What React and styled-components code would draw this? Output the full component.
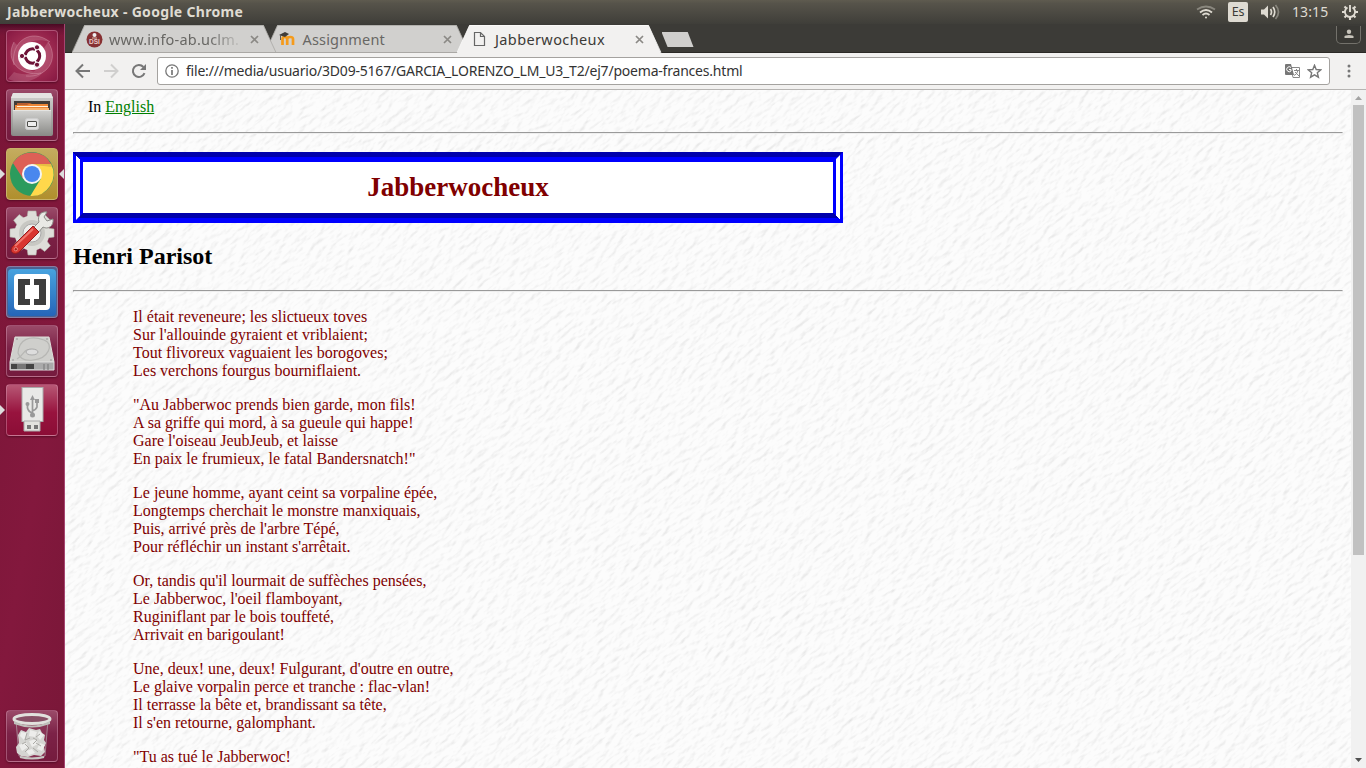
import React from 'react';
import styled, { createGlobalStyle } from 'styled-components';

const GlobalStyle = createGlobalStyle`
  * { box-sizing: border-box; }
  body { margin: 0; overflow: hidden; }
  svg { display: block; flex: none; }
`;
const uiFont = `"Noto Sans", "Open Sans", sans-serif`;

const Desktop = styled.div`
  width: 1366px; height: 768px; display: flex; flex-direction: column; overflow: hidden;
  background: #3c3b37; font-family: ${uiFont};
`;
const TopPanel = styled.header`
  height: 24px; flex: none; display: flex; align-items: center; justify-content: space-between;
  padding: 0 8px 0 7px; color: #dfdbd2; background: linear-gradient(#5f5b4f 0, #56534a 15%, #3f3e39 100%);
`;
const UiText = styled.span`
  display: inline-block; white-space: nowrap; line-height: 20px;
  width: ${p => p.$w}px; font-size: 14px; font-weight: ${p => p.$bold ? 700 : 400};
  letter-spacing: ${p => p.$track || 0}px;
`;
const Indicators = styled.div`display: flex; align-items: center; height: 24px;`;
const Clock = styled(UiText)`margin: 0 13px 0 12px;`;
const Keyboard = styled.span`
  width: 20px; height: 20px; margin: 0 12px; border-radius: 2px; background: #dfdbd2; color: #3c3b37;
  font-size: 12.5px; line-height: 20px; text-align: center; letter-spacing: -.3px;
`;
const Workspace = styled.div`display: flex; flex: 1; min-height: 0;`;
const Launcher = styled.nav`
  width: 65px; flex: none; padding: 6px 7px 6px 6px; display: flex; flex-direction: column; gap: 7px;
  border-right: 1px solid #a64571;
  background: linear-gradient(#4a0923 0, #6d1435 6px, transparent 12px), linear-gradient(100deg, #791536, #83183d 60%, #791738);
`;
const Tile = styled.div`
  position: relative; width: 52px; height: 52px; flex: none; border-radius: 4px;
  background: ${p => p.$bg || 'linear-gradient(#9a4a68, #7c2247 45%, #751b3e)'};
  border: 1px solid ${p => p.$edge || 'rgba(221,160,185,.42)'};
  box-shadow: 0 1px 2px rgba(50,0,20,.5);
  margin-top: ${p => p.$last ? 'auto' : 0};
  & > svg { margin: -1px; }
`;
const Arrow = styled.i`
  position: absolute; top: 20px; width: 0; height: 0; border: 5px solid transparent;
  ${p => p.$right ? 'right: -7px; border-right-color: #ddd; border-left: 0;' : 'left: -7px; border-left-color: #ddd; border-right: 0;'}
`;
const Browser = styled.main`flex: 1; min-width: 0; display: flex; flex-direction: column;`;
const TabStrip = styled.div`
  height: 29px; flex: none; display: flex; padding-left: 7px;
  background: #3c3b37; box-shadow: inset 0 -1px #2b2926;
`;
const Tab = styled.div`
  position: relative; z-index: ${p => p.$z}; width: 205px; height: 29px; margin-right: -12.5px; flex: none;
  display: flex; align-items: center; padding: 1px 18px 0 14px;
`;
const TabShape = styled.svg`position: absolute; left: 0; top: 0; z-index: -1;`;
const TabTitle = styled.div`
  flex: 1; min-width: 0; white-space: nowrap; margin-left: ${p => p.$gap || 6}px;
  font-size: 14.5px; line-height: 20px; letter-spacing: ${p => p.$track || 0}px; color: ${p => p.$active ? '#3c3b37' : '#686764'};
  ${p => p.$fade && 'mask-image: linear-gradient(90deg, #000 100px, transparent 135px);'}
`;
const NewTab = styled.div`
  width: 32px; height: 15px; margin: 8px 0 0 12px; background: #d0cfcd;
  clip-path: polygon(0 0, 82% 0, 100% 100%, 19% 100%);
`;
const Profile = styled.div`
  width: 25px; height: 18px; margin: 2px 5px 0 auto; display: flex; justify-content: center; padding-top: 3px;
  border: 1px solid #73716b; border-top: 0; border-radius: 0 0 5px 5px; background: #393834;
`;
const Toolbar = styled.div`
  height: 37px; flex: none; display: flex; align-items: center; padding: 0 15px 0 10px;
  background: #f2f1f0; border-bottom: 1px solid #b6b4b2;
`;
const NavButtons = styled.div`display: flex; gap: 12px; margin-right: 10px;`;
const Address = styled.div`
  width: 1173px; height: 28px; margin-right: auto; display: flex; align-items: center; padding: 0 7px;
  background: #fff; border: 1px solid #a4a29f; border-radius: 3px;
`;
const PageActions = styled.div`display: flex; gap: 7px;`;
const Url = styled.div`
  flex: 1; margin-left: 7px; font-size: 14px; line-height: 20px; letter-spacing: -.205px; color: #333; white-space: nowrap;
`;
const Viewport = styled.div`flex: 1; min-height: 0; display: flex;`;
const Page = styled.article`
  position: relative; z-index: 0; flex: 1; overflow: hidden; padding: 8px; background: #fcfcfc;
  font: 16px/18px "Liberation Serif", serif; color: #000;
`;
const Paper = styled.svg`position: absolute; inset: 0; z-index: -1;`;
const LanguageLine = styled.p`margin: 0 0 16px 15px; a { color: #008000; }`;
const Rule = styled.hr`margin: 0; height: 2px; border: 1px solid; border-color: #9a9a9a #eee #eee #9a9a9a;`;
const Title = styled.h1`
  width: 770px; height: 71px; margin: 18px 0 20px; border: 10px blue; border-style: groove double; background: #fff;
  color: #800000; font-size: 27px; line-height: 51px; text-align: center;
`;
const Author = styled.h2`margin: 0 0 20px; font-size: 24px; line-height: 27px;`;
const Poem = styled.blockquote`margin: 16px 60px; color: #800000;`;
const Stanza = styled.p`margin: 0 0 16px; white-space: pre-line;`;
const Scrollbar = styled.div`
  width: 15px; display: flex; flex-direction: column; align-items: center; background: #f1f1f1;
`;
const Track = styled.div`flex: 1;`;
const Thumb = styled.div`width: 11px; height: 450px; background: #c1c1c1;`;

const stanzas = [
`Il était reveneure; les slictueux toves
Sur l'allouinde gyraient et vriblaient;
Tout flivoreux vaguaient les borogoves;
Les verchons fourgus bourniflaient.`,
`"Au Jabberwoc prends bien garde, mon fils!
A sa griffe qui mord, à sa gueule qui happe!
Gare l'oiseau JeubJeub, et laisse
En paix le frumieux, le fatal Bandersnatch!"`,
`Le jeune homme, ayant ceint sa vorpaline épée,
Longtemps cherchait le monstre manxiquais,
Puis, arrivé près de l'arbre Tépé,
Pour réfléchir un instant s'arrêtait.`,
`Or, tandis qu'il lourmait de suffèches pensées,
Le Jabberwoc, l'oeil flamboyant,
Ruginiflant par le bois touffeté,
Arrivait en barigoulant!`,
`Une, deux! une, deux! Fulgurant, d'outre en outre,
Le glaive vorpalin perce et tranche : flac-vlan!
Il terrasse la bête et, brandissant sa tête,
Il s'en retourne, galomphant.`,
`"Tu as tué le Jabberwoc!`,
];

const Icon = ({ w = 52, h = w, box, ...rest }) => <svg width={w} height={h} viewBox={box || `0 0 ${w} ${h}`} fill="none" {...rest} />;

const UbuntuIcon = () => <Icon>
  <g fill="#e6b5c3" opacity=".22">
    <path d="M8 35C4 12 25-3 44 12 28 7 17 13 12 27z" /><path d="M42 12c12 18-2 36-22 34C33 40 41 31 38 18z" /><path d="M8 12C-2 31 15 47 35 43 19 42 12 31 14 18z" /><path d="M2 49C20 57 38 48 43 32 35 43 20 47 8 42z" />
  </g>
  <g stroke="#dfa6b6" opacity=".4"><path d="M8 35C4 12 25-3 44 12M42 12c12 18-2 36-22 34M8 12C-2 31 15 47 35 43" /></g>
  <circle cx="26" cy="26" r="14" fill="#fff" />
  <circle cx="26.5" cy="26" r="7.2" stroke="#6d1237" strokeWidth="3" />
  <path d="M15.5 26h11M31.5 17.3 26.5 26l5 8.7" stroke="#fff" strokeWidth="1.5" />
  <circle cx="26.5" cy="26" r="5" fill="#fff" />
  <g fill="#6d1237" stroke="#fff"><circle cx="16" cy="26" r="2.6" /><circle cx="31" cy="17.3" r="2.6" /><circle cx="31" cy="34.7" r="2.6" /></g>
</Icon>;

const FilesIcon = () => <Icon>
  <defs><linearGradient id="metal" x2="0" y2="1"><stop stopColor="#d2d2d0" /><stop offset="1" stopColor="#898986" /></linearGradient></defs>
  <path d="M7 4h38l2 5v36q0 2-2 2H7q-2 0-2-2V9z" fill="url(#metal)" />
  <path d="M7 4h38l2 5H5z" fill="#e4e4e2" /><path d="M8 12h36v12H8z" fill="#423d38" />
  <path d="M11 14h13l2 1h15v9H11z" fill="#b85e2f" /><path d="M9 16h12l2-1h19v9H9z" fill="#ed8736" />
  <path d="M11 17h31v1H11z" fill="#fff4df" /><path d="M9 19h34v3H9z" fill="#f9b36e" />
  <path d="M7 21h38v24q0 2-2 2H9q-2 0-2-2z" fill="url(#metal)" /><path d="M7 21.5h38" stroke="#e4e4e2" />
  <rect x="19.5" y="29.5" width="13" height="11" rx="2" fill="#ddd" stroke="#ccc" /><rect x="21.5" y="32.5" width="9" height="5" rx=".5" fill="#eee" stroke="#4d4d49" />
</Icon>;

const ChromeIcon = () => <Icon>
  <circle cx="26" cy="26" r="22" fill="#2b9b5d" />
  <path d="M6.9 15.1A22 22 0 0 1 45.1 16H26l-8.7 15z" fill="#dd6056" />
  <path d="M26 16h19.1A22 22 0 0 1 24.3 48L34.7 31z" fill="#ffd84b" />
  <path d="M28 16h17l1 3-17-2z" fill="#9a692b" opacity=".25" />
  <circle cx="26" cy="26" r="10" fill="#f4f4f3" /><circle cx="26" cy="26" r="8" fill="#4987ee" />
</Icon>;

const SettingsIcon = () => <Icon>
  <g fill="#deded9">
    {[0, 45, 90, 135, 180, 225, 270, 315].map(a => <path key={a} d="M21 11l1-7h8l1 7z" transform={`rotate(${a} 26 26)`} stroke="#b1b1aa" strokeWidth=".6" />)}
    <circle cx="26" cy="26" r="17.5" />
  </g>
  <circle cx="26" cy="26" r="13" fill="#c8c8c3" /><circle cx="26" cy="26" r="9" fill="#eeeeeb" stroke="#aaa" />
  <path d="M27 21l6-6c-2-6 2-11 8-10l-3 5 3 4 6-2c1 7-5 11-10 8l-6 7z" fill="#e9e9e5" stroke="#8d8d88" />
  <path d="M7 39L27 19l6 6-20 20c-5 4-11-1-6-6z" fill="#d93630" stroke="#971c1d" /><path d="M9 39l18-17" stroke="#f1766c" strokeWidth="2" />
  <circle cx="9.8" cy="42.2" r="1.7" fill="#a51f1e" stroke="#ee8a80" />
</Icon>;

const BracketsIcon = () => <Icon>
  <defs><linearGradient id="bluepane" x2="0" y2="1"><stop stopColor="#48a3df" /><stop offset="1" stopColor="#2565b8" /></linearGradient></defs>
  <rect x="2" y="3" width="48" height="47" rx="4" fill="url(#bluepane)" /><rect x="8" y="8" width="36" height="36" rx="4" fill="#fff" />
  <path d="M12 13h12v6h-5v14h5v6H12zM28 13h12v26H28v-6h5V19h-5z" fill="#3d3d3d" />
</Icon>;

const DiskIcon = () => <Icon>
  <path d="M9 12h34l5 25H4z" fill="#cfcfcc" stroke="#deded9" /><path d="M4 37h44v8H4z" fill="#aaa" stroke="#ddd" />
  <path d="M5 39h23v5H5z" fill="#444" /><path d="M11 39h9v5h-9z" fill="#777" /><path d="M38 39v6M42 39v6" stroke="#777" />
  <path d="M12 28c1-14 12-18 26-13 11 4 4 19-11 20-8 1-13-1-15-7zM11 34c9-5 5-12 19-9" stroke="#b7b7b4" strokeWidth="1.2" />
  <ellipse cx="26" cy="27" rx="6" ry="3" fill="#ddd" stroke="#aaa" />
  <g fill="#aaa"><circle cx="11" cy="14" r="1" /><circle cx="41" cy="14" r="1" /><circle cx="7" cy="35" r="1" /><circle cx="45" cy="35" r="1" /></g>
</Icon>;

const UsbIcon = () => <Icon>
  <rect x="16" y="3.5" width="21" height="34" fill="#e9e9e7" stroke="#aaa" /><path d="M18 37h16v10H18z" fill="#e3e3df" stroke="#aaa" />
  <path d="M21 41h4v4h-4zM28 41h4v4h-4z" fill="#777" />
  <path d="M26.5 31V14M21.5 20v4q1 4 5 5M31 16v7q-1 3-5 4" stroke="#999" strokeWidth="1.7" />
  <path d="M24 16l2.5-5 2.5 5z" fill="#999" /><circle cx="26.5" cy="31" r="2.5" fill="#999" /><circle cx="21.5" cy="20" r="2" fill="#999" /><path d="M29 15h4v4h-4z" fill="#999" />
</Icon>;

const TrashIcon = () => <Icon>
  <path d="M10 10h32l-3 36q-13 5-26 0z" fill="#8b3858" fillOpacity=".75" stroke="#bbb" strokeOpacity=".6" />
  <path d="M12 25l3-5 5 2 3-4 7 2 4-1 2 4 3 2-1 5 2 3-2 4 1 5-4 4-7-1-6 2-7-1-4-3-1-6 3-4z" fill="#d5d5d2" />
  <g fill="#ededeb"><path d="M15 22l6 1-3 7-4-4zM24 20l7 2-2 5-6-1zM33 21l5 4-4 5-3-4zM13 35l7-3 2 5-6 4zM23 31l7-2 2 5-6 3zM34 33l5 2-3 6-5-2zM20 41l6-2 3 4-6 2z" /></g>
  <path d="M21 23l-2 7 5-2m3 0 4 2-4 4m-8 0 4 4-4 4m8-4 5 4m-2-15 4-3m-18 10 4-2m10 1 5 3" stroke="#aaa9a5" />
  <ellipse cx="26" cy="9" rx="18" ry="4.5" fill="#885066" stroke="#e1e1dd" strokeWidth="3" />
  <path d="M8 11q18 9 36 0v3q-18 7-36 0z" fill="#bfbfba" /><path d="M14 47q12 3 24 0" stroke="#c8c8c4" strokeWidth="2" />
</Icon>;

const CloseTab = () => <Icon w={9} stroke="#8b8985" strokeWidth="1.7"><path d="M1 1l7 7M8 1L1 8" /></Icon>;
const Shape = ({ active }) => <TabShape width="205" height="29">
  <path d="M0 29L12.5 1H191.5L204 29z" fill={active ? '#f2f1f0' : '#d1d0ce'} />
  <path d="M0 28.5L12.5 1.5H191.5L204 28.5" fill="none" stroke={active ? '#fbfbfa' : '#aaa8a5'} strokeWidth=".8" />
  {!active && <path d="M0 28.5H205" stroke="#aaa8a5" />}
</TabShape>;
const DsiIcon = () => <Icon w={17}><circle cx="8.5" cy="8.5" r="8" fill="#863032" /><circle cx="8.5" cy="4" r="2" fill="#eee" />
  <path d="M6 7h5" stroke="#dba" /><text x="8.5" y="12.5" textAnchor="middle" fontFamily="Liberation Sans, sans-serif" fontSize="6.5" fontWeight="700" fill="#e9c9c5">DSI</text></Icon>;
const MoodleIcon = () => <Icon w={16}><path d="M3.5 14V8q0-2 2.3-2T8.2 8v6M8.2 8q0-2 3-2T14 8v6" stroke="#f59b1b" strokeWidth="2.7" />
  <path d="M0 4l6-3 4 2-4 3z" fill="#403d39" /><path d="M1.5 4v5" stroke="#615d55" /></Icon>;

const WifiIcon = () => <Icon w={20} h={16} stroke="#dfdbd2" strokeWidth="1.8"><path d="M1 5.5q9-6 18 0" opacity=".4" /><path d="M4 8.5q6-5 12 0M6.5 11q3.5-3 7 0" /><circle cx="10" cy="13.5" r="1" fill="#dfdbd2" stroke="none" /></Icon>;
const SoundIcon = () => <Icon w={20} h={18}><path d="M1 6.5h3l4-4v13l-4-4H1z" fill="#dfdbd2" /><path d="M10.5 6q2 3 0 6M13 4q3.5 5 0 10" stroke="#dfdbd2" strokeWidth="1.7" /><path d="M15.5 2q6 7 0 14" stroke="#dfdbd2" opacity=".4" strokeWidth="1.7" /></Icon>;
const GearIcon = () => <Icon w={16} stroke="#dfdbd2" strokeWidth="1.9"><path d="M5.5 3.5a5.1 5.1 0 1 0 5 0M8 1v7" />
  <path d="M2.5 2.5l2 2M13.5 2.5l-2 2M0 8h3M13 8h3M2.5 13.5l2-2M13.5 13.5l-2-2M8 13v3" strokeWidth="2.1" /></Icon>;

const BackForward = ({ forward }) => <Icon w={16} stroke={forward ? '#d0cfce' : '#777'} strokeWidth="2"><path d={forward ? 'M8 1.5L14.5 8 8 14.5M14 8H1' : 'M8 1.5L1.5 8 8 14.5M2 8h13'} /></Icon>;
const ReloadIcon = () => <Icon w={16}><path d="M13.5 10.2A6 6 0 1 1 12.4 4" stroke="#777" strokeWidth="2" /><path d="M15 1v6H9z" fill="#777" /></Icon>;
const InfoIcon = () => <Icon w={14} stroke="#777" strokeWidth="1.3"><circle cx="7" cy="7" r="6.2" /><path d="M7 6v5M7 3v1.7" strokeWidth="1.7" /></Icon>;
const TranslateIcon = () => <Icon w={15}><path d="M6 3.5h8.5v10H8z" fill="#fff" stroke="#888" /><path d="M9 6.5h5M11.5 5v1.5M13 6.5q-1 4-4 5M10 8l4 4" stroke="#888" />
  <path d="M1 0h5l3 11H1q-1 0-1-1V1q0-1 1-1z" fill="#777" /><path d="M6 3.5a2.5 2.5 0 1 0 0 3.5V5.5H4" stroke="#fff" /></Icon>;
const StarIcon = () => <Icon w={15}><path d="M7.5 1.3l1.7 4.2 4.6.3-3.5 2.9 1.1 4.5-3.9-2.4-3.9 2.4 1.1-4.5L1.2 5.8l4.6-.3z" stroke="#777" strokeWidth="1.4" /></Icon>;
const MenuIcon = () => <Icon w={4} h={14}>{[2, 7, 12].map(y => <circle key={y} cx="2" cy={y} r="1.5" fill="#777" />)}</Icon>;
const FileIcon = () => <Icon w={16}><path d="M3.5 1.5h6l4 4v9h-10zM9.5 1.5v4h4" stroke="#666" strokeWidth="1.2" /></Icon>;
const PersonIcon = () => <Icon w={10}><circle cx="5" cy="2.8" r="2.2" fill="#c7c3ba" /><path d="M.5 9V7.5Q1 6 5 6t4.5 1.5V9z" fill="#c7c3ba" /></Icon>;

const PaperTexture = () => <Paper width="1286" height="678">
  <defs>
    <filter id="relief" x="0" y="0" width="100%" height="100%" colorInterpolationFilters="sRGB">
      <feTurbulence type="fractalNoise" baseFrequency=".09 .21" numOctaves="5" seed="7" />
      <feDiffuseLighting surfaceScale="1.3" diffuseConstant="1.17" lightingColor="#fff"><feDistantLight azimuth="250" elevation="58" /></feDiffuseLighting>
    </filter>
    <clipPath id="paperEdge"><rect width="1286" height="678" /></clipPath>
  </defs>
  <g clipPath="url(#paperEdge)" opacity=".19"><rect x="-500" y="-100" width="1700" height="1500" transform="rotate(-38)" filter="url(#relief)" /></g>
</Paper>;

export default function App() {
  return <Desktop>
    <GlobalStyle />
    <TopPanel>
      <UiText $w={300} $bold $track={0.31}>Jabberwocheux - Google Chrome</UiText>
      <Indicators><WifiIcon /><Keyboard>Es</Keyboard><SoundIcon /><Clock $w={37} $track={0.1}>13:15</Clock><GearIcon /></Indicators>
    </TopPanel>
    <Workspace>
      <Launcher>
        <Tile $bg="radial-gradient(circle, #b43b63, #9e2b51 55%, #861842)"><UbuntuIcon /></Tile>
        <Tile><FilesIcon /></Tile>
        <Tile $bg="linear-gradient(#c4ac5f, #b08f2d)" $edge="#c8b269"><Arrow /><Arrow $right /><ChromeIcon /></Tile>
        <Tile><SettingsIcon /></Tile>
        <Tile $bg="#4d6292"><BracketsIcon /></Tile>
        <Tile><DiskIcon /></Tile>
        <Tile $bg="linear-gradient(#b75875, #98133e 55%, #8b0d36)"><Arrow /><UsbIcon /></Tile>
        <Tile $last><TrashIcon /></Tile>
      </Launcher>
      <Browser>
        <TabStrip>
          <Tab $z={2}><Shape /><DsiIcon /><TabTitle $fade $track={0.2}>www.info-ab.uclm.</TabTitle><CloseTab /></Tab>
          <Tab $z={1}><Shape /><MoodleIcon /><TabTitle $gap={8} $track={0.18}>Assignment</TabTitle><CloseTab /></Tab>
          <Tab $z={3}><Shape active /><FileIcon /><TabTitle $active $gap={8} $track={0.38}>Jabberwocheux</TabTitle><CloseTab /></Tab>
          <NewTab />
          <Profile><PersonIcon /></Profile>
        </TabStrip>
        <Toolbar>
          <NavButtons><BackForward /><BackForward forward /><ReloadIcon /></NavButtons>
          <Address><InfoIcon /><Url>file:///media/usuario/3D09-5167/GARCIA_LORENZO_LM_U3_T2/ej7/poema-frances.html</Url><PageActions><TranslateIcon /><StarIcon /></PageActions></Address>
          <MenuIcon />
        </Toolbar>
        <Viewport>
          <Page>
            <PaperTexture />
            <LanguageLine>In <a href="#english">English</a></LanguageLine>
            <Rule /><Title>Jabberwocheux</Title><Author>Henri Parisot</Author><Rule />
            <Poem>{stanzas.map((s, i) => <Stanza key={i}>{s}</Stanza>)}</Poem>
          </Page>
          <Scrollbar>
            <Icon w={15}><path d="M4 10l3.5-4 3.5 4z" fill="#a3a3a3" /></Icon>
            <Track><Thumb /></Track>
            <Icon w={15}><path d="M4 5l3.5 4L11 5z" fill="#505050" /></Icon>
          </Scrollbar>
        </Viewport>
      </Browser>
    </Workspace>
  </Desktop>;
}
